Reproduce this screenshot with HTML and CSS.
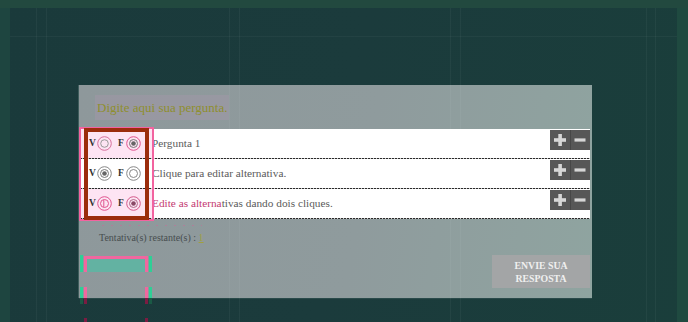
FILE: index.html
```html
<!DOCTYPE html>
<html lang="pt">
<head>
<meta charset="utf-8">
<title>Verdadeiro ou Falso</title>
<link rel="stylesheet" href="styles.css">
</head>
<body>
<div class="stage">
  <section class="panel">
    <h1 class="question"><span class="question-text">Digite aqui sua pergunta.</span></h1>
    <div class="options">
      <div class="row row-pink">
        <div class="vf">
          <b class="vf-letter">V</b>
          <svg class="radio" width="15" height="15" viewBox="0 0 15 15"><circle cx="7.5" cy="7.5" r="6.8" fill="none" stroke="#d6709c" stroke-width="1"/><circle cx="7.5" cy="7.5" r="3.8" fill="none" stroke="#999" stroke-width="1"/></svg>
          <b class="vf-letter f">F</b>
          <svg class="radio" width="15" height="15" viewBox="0 0 15 15"><circle cx="7.5" cy="7.5" r="6.8" fill="none" stroke="#e0558f" stroke-width="1"/><circle cx="7.5" cy="7.5" r="4" fill="none" stroke="#777" stroke-width="1"/><circle cx="7.5" cy="7.5" r="2.3" fill="#666"/></svg>
        </div>
        <div class="label">Pergunta 1</div>
        <div class="ctrl">
          <span class="btn"><svg width="20" height="20" viewBox="0 0 20 20"><rect x="8.3" y="4" width="3.6" height="12" fill="#d6d6d6"/><rect x="4" y="8.2" width="12" height="3.6" fill="#d6d6d6"/></svg></span>
          <span class="btn"><svg width="20" height="20" viewBox="0 0 20 20"><rect x="4.5" y="8.4" width="11" height="3.2" fill="#d6d6d6"/></svg></span>
        </div>
      </div>
      <div class="row">
        <div class="vf">
          <b class="vf-letter">V</b>
          <svg class="radio" width="15" height="15" viewBox="0 0 15 15"><circle cx="7.5" cy="7.5" r="6.8" fill="none" stroke="#888" stroke-width="1"/><circle cx="7.5" cy="7.5" r="4" fill="none" stroke="#777" stroke-width="1"/><circle cx="7.5" cy="7.5" r="2.3" fill="#666"/></svg>
          <b class="vf-letter f">F</b>
          <svg class="radio" width="15" height="15" viewBox="0 0 15 15"><circle cx="7.5" cy="7.5" r="6.8" fill="none" stroke="#888" stroke-width="1"/><circle cx="7.5" cy="7.5" r="4" fill="none" stroke="#888" stroke-width="1"/></svg>
        </div>
        <div class="label">Clique para editar alternativa.</div>
        <div class="ctrl">
          <span class="btn"><svg width="20" height="20" viewBox="0 0 20 20"><rect x="8.3" y="4" width="3.6" height="12" fill="#d6d6d6"/><rect x="4" y="8.2" width="12" height="3.6" fill="#d6d6d6"/></svg></span>
          <span class="btn"><svg width="20" height="20" viewBox="0 0 20 20"><rect x="4.5" y="8.4" width="11" height="3.2" fill="#d6d6d6"/></svg></span>
        </div>
      </div>
      <div class="row row-pink">
        <div class="vf">
          <b class="vf-letter">V</b>
          <svg class="radio" width="15" height="15" viewBox="0 0 15 15"><circle cx="7.5" cy="7.5" r="6.8" fill="none" stroke="#e0558f" stroke-width="1"/><circle cx="7.5" cy="7.5" r="4" fill="none" stroke="#e0558f" stroke-width="1"/><line x1="6.8" y1="3.8" x2="6.8" y2="11.2" stroke="#e0558f" stroke-width="1"/></svg>
          <b class="vf-letter f">F</b>
          <svg class="radio" width="15" height="15" viewBox="0 0 15 15"><circle cx="7.5" cy="7.5" r="6.8" fill="none" stroke="#d45a8a" stroke-width="1"/><circle cx="7.5" cy="7.5" r="4" fill="none" stroke="#b06a88" stroke-width="1"/><circle cx="7.5" cy="7.5" r="2.3" fill="#8a4a66"/></svg>
        </div>
        <div class="label"><span class="hl">Edite as alterna</span>tivas dando dois cliques.</div>
        <div class="ctrl">
          <span class="btn"><svg width="20" height="20" viewBox="0 0 20 20"><rect x="8.3" y="4" width="3.6" height="12" fill="#d6d6d6"/><rect x="4" y="8.2" width="12" height="3.6" fill="#d6d6d6"/></svg></span>
          <span class="btn"><svg width="20" height="20" viewBox="0 0 20 20"><rect x="4.5" y="8.4" width="11" height="3.2" fill="#d6d6d6"/></svg></span>
        </div>
      </div>
      <div class="col-outline"></div>
      <div class="col-frame"></div>
      <div class="pink-dots"></div>
    </div>
    <div class="footer">
      <p class="tries">Tentativa(s) restante(s) : <span class="tries-count">1</span></p>
      <button class="send" type="button">ENVIE SUA<br>RESPOSTA</button>
    </div>
  </section>

  <div class="guides">
    <i class="gv g1"></i><i class="gv g2"></i><i class="gv g3"></i><i class="gv g4"></i>
    <i class="gv g5"></i><i class="gv g6"></i><i class="gv g7"></i><i class="gv g8"></i>
    <i class="gh"></i>
  </div>

  <div class="glitch glitch-a">
    <i class="ga-green-l"></i><i class="ga-top"></i><i class="ga-pink-l"></i><i class="ga-pink-r"></i><i class="ga-green-r"></i><i class="ga-fill"></i>
  </div>
  <div class="glitch glitch-b">
    <i class="gb-green-l"></i><i class="gb-pink-l"></i><i class="gb-pink-r"></i><i class="gb-green-r"></i>
  </div>
  <div class="glitch glitch-c">
    <i class="gc-pink-l"></i><i class="gc-pink-r"></i>
  </div>
</div>
</body>
</html>
```

FILE: styles.css
```css
html, body {
  margin: 0;
  padding: 0;
}

body {
  width: 688px;
  height: 322px;
  overflow: hidden;
  background: #1f473f;
  font-family: "Liberation Serif", "Times New Roman", serif;
}

.stage {
  position: relative;
  width: 688px;
  height: 322px;
  box-sizing: border-box;
  padding: 85px 0 0 79px;
  background:
    linear-gradient(#22493f, #22493f) top left / 688px 8px no-repeat,
    linear-gradient(90deg, #1e4540 0, #1e4540 10px, transparent 10px, transparent 677px, #1f4a40 677px),
    linear-gradient(100deg, #1a3a3b 0%, #1b3b3c 50%, #1a3e3b 100%);
}

/* ---------- panel ---------- */
.panel {
  position: relative;
  width: 513px;
  height: 213px;
  box-sizing: border-box;
  background: linear-gradient(100deg, #8e989b 0%, #8f9b9d 55%, #8fa4a0 100%);
  box-shadow: 0 1px 0 #2a4a4a, -1px 0 0 #3e5d5c;
  display: flex;
  flex-direction: column;
}

.question {
  margin: 10px 0 0 16px;
  font-size: 13px;
  font-weight: normal;
  line-height: 19px;
}

.question-text {
  display: inline-block;
  padding: 3px 2px;
  color: #8f8f2e;
  background: rgba(214, 150, 200, 0.14);
}

/* ---------- options ---------- */
.options {
  position: relative;
  margin: 9px 2px 0 1px;
}

.row {
  position: relative;
  display: flex;
  align-items: flex-start;
  height: 29px;
  background: #fff;
  border-bottom: 1px solid transparent;
  background-clip: padding-box;
}

.row::after {
  content: "";
  position: absolute;
  left: 0;
  right: 0;
  bottom: -1px;
  height: 1px;
  background: repeating-linear-gradient(90deg, #2a2a2a 0 2px, #c8c8c8 2px 3px);
}

.vf {
  width: 72px;
  height: 29px;
  flex: none;
  display: flex;
  align-items: center;
  box-sizing: border-box;
  padding-left: 9px;
}

.row-pink .vf {
  background: #fde4f3;
}

.vf-letter {
  font-size: 9.5px;
  font-weight: bold;
  color: #333;
  margin-right: 1px;
  line-height: 1;
}

.vf-letter.f {
  margin-left: 6px;
  margin-right: 2px;
}

.radio {
  display: block;
}

.label {
  padding-left: 0;
  font-size: 11.3px;
  line-height: 29px;
  color: #5a5a5a;
  white-space: nowrap;
}

.hl {
  color: #c43a72;
}

.ctrl {
  margin-left: auto;
  margin-top: 1px;
  display: flex;
}

.btn {
  display: block;
  width: 20px;
  height: 20px;
  background: #575757;
}

.btn + .btn {
  box-shadow: inset 1px 0 0 #474747;
}

.btn svg {
  display: block;
}

.col-outline {
  position: absolute;
  left: -1px;
  top: -2px;
  width: 75px;
  height: 94px;
  box-sizing: border-box;
  border: 2px solid #f2639f;
  pointer-events: none;
}

.col-frame {
  position: absolute;
  left: 4px;
  top: -1px;
  width: 65px;
  height: 92px;
  box-sizing: border-box;
  border: 4px solid #9b2d0c;
  pointer-events: none;
}

.pink-dots {
  position: absolute;
  left: 22px;
  top: 96px;
  width: 100px;
  height: 1px;
  background: repeating-linear-gradient(90deg, rgba(220, 90, 150, 0.4) 0 2px, transparent 2px 9px);
}

/* ---------- footer ---------- */
.footer {
  display: flex;
  flex-direction: column;
}

.tries {
  margin: 10px 0 0 20px;
  font-size: 10px;
  line-height: 18px;
  color: #474d4f;
}

.tries-count {
  color: #a0a040;
  text-decoration: underline;
}

.send {
  align-self: flex-end;
  margin: 8px 2px 0 0;
  width: 98px;
  height: 33px;
  padding: 0;
  border: 0;
  background: #a3a5a6;
  color: #efefef;
  font-family: "Liberation Serif", "Times New Roman", serif;
  font-weight: bold;
  font-size: 9.8px;
  line-height: 13px;
  text-align: center;
}

/* ---------- layout guides overlay ---------- */
.guides {
  position: absolute;
  inset: 0;
  pointer-events: none;
}

.gv {
  position: absolute;
  top: 8px;
  bottom: 0;
  width: 1px;
  background: rgba(255, 255, 255, 0.045);
}

.g1 { left: 36px; }
.g2 { left: 46px; }
.g3 { left: 229px; }
.g4 { left: 239px; }
.g5 { left: 450px; }
.g6 { left: 460px; }
.g7 { left: 646px; }
.g8 { left: 655px; }

.gh {
  position: absolute;
  left: 10px;
  width: 667px;
  top: 36px;
  height: 1px;
  background: rgba(255, 255, 255, 0.04);
}

/* ---------- glitch artefacts ---------- */
.glitch {
  position: absolute;
  left: 80px;
  width: 72px;
  pointer-events: none;
}

.glitch i {
  position: absolute;
  display: block;
}

.glitch-a {
  top: 255px;
  height: 17px;
}

.ga-green-l { left: 0; top: 0; width: 3px; height: 17px; background: #2fcf96; }
.ga-top { left: 4px; top: 1px; width: 64px; height: 3px; background: #f0679f; }
.ga-pink-l { left: 4px; top: 1px; width: 3px; height: 16px; background: #f0679f; }
.ga-pink-r { left: 65px; top: 1px; width: 3px; height: 16px; background: #f0679f; }
.ga-green-r { left: 69px; top: 1px; width: 3px; height: 16px; background: #2fcf96; }
.ga-fill { left: 7px; top: 4px; width: 58px; height: 13px; background: #63b2a2; }

.glitch-b {
  top: 287px;
  height: 17px;
}

.gb-green-l { left: 0; top: 0; width: 3px; height: 11px; background: #2fcf96; box-shadow: 0 6px 0 #1a5a45; }
.gb-pink-l { left: 4px; top: 0; width: 3px; height: 11px; background: #f0679f; box-shadow: 0 6px 0 #7a1c42; }
.gb-pink-r { left: 65px; top: 0; width: 3px; height: 11px; background: #f0679f; box-shadow: 0 6px 0 #7a1c42; }
.gb-green-r { left: 69px; top: 0; width: 3px; height: 11px; background: #2fcf96; box-shadow: 0 6px 0 #1a5a45; }

.glitch-c {
  top: 318px;
  height: 4px;
}

.gc-pink-l { left: 4px; top: 0; width: 3px; height: 4px; background: #7a1c42; }
.gc-pink-r { left: 65px; top: 0; width: 3px; height: 4px; background: #7a1c42; }
```
